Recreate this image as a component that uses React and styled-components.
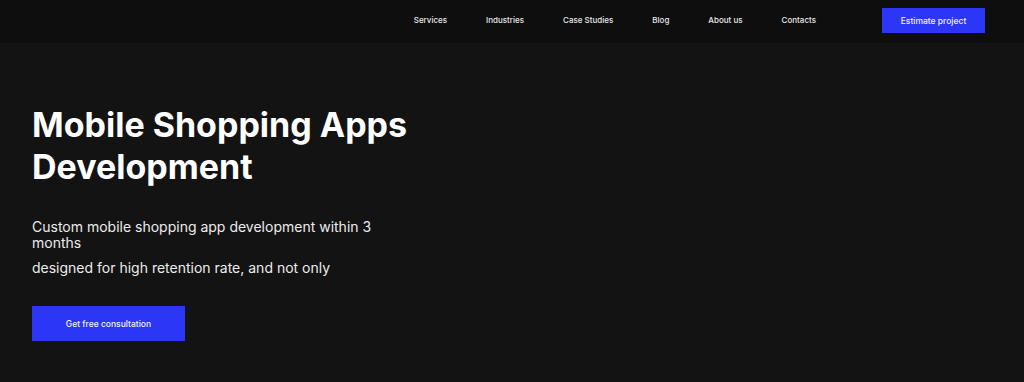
import React from "react";
import styled, { createGlobalStyle } from "styled-components";

const Global = createGlobalStyle`
  html, body { margin: 0; padding: 0; background: #131313; }
  body { font-family: Inter, "Noto Sans", sans-serif; color: #fff; }
  * { box-sizing: border-box; }
`;

const Page = styled.div`
  width: 1024px;
  height: 382px;
  background: #131313;
  overflow: hidden;
`;

const Header = styled.header`
  height: 43px;
  background: #0e0e0e;
  display: flex;
  align-items: center;
  justify-content: flex-end;
  padding-right: 39px;
`;

const Nav = styled.nav`
  display: flex;
  align-items: center;
  gap: 39px;
  margin-right: 66px;
`;

const NavLink = styled.a`
  font-size: 8px;
  font-weight: 500;
  color: #e8e8e8;
  text-decoration: none;
  margin-top: -3px;
`;

const Button = styled.button`
  border: none;
  background: #2b36f7;
  color: #f2f2ff;
  font-family: Inter, "Noto Sans", sans-serif;
  font-size: 8.5px;
  font-weight: 500;
  width: ${(p) => p.$w}px;
  height: ${(p) => p.$h}px;
  padding: 0;
  cursor: pointer;
`;

const HeaderButton = styled(Button)`
  margin-top: -2px;
`;

const Hero = styled.section`
  padding: 61px 0 0 32px;
  display: flex;
  flex-direction: column;
  align-items: flex-start;
`;

const Title = styled.h1`
  margin: 0;
  font-size: 34px;
  font-weight: 700;
  line-height: 42px;
  color: #fff;
`;

const Lead = styled.div`
  margin-top: 31px;
  width: 372px;
  display: flex;
  flex-direction: column;
  gap: 9px;
`;

const LeadLine = styled.p`
  margin: 0;
  font-size: 14px;
  line-height: 16px;
  color: #ececec;
`;

const HeroButton = styled(Button)`
  margin-top: 30px;
`;

const links = ["Services", "Industries", "Case Studies", "Blog", "About us", "Contacts"];

export default function App() {
  return (
    <Page>
      <Global />
      <Header>
        <Nav>
          {links.map((l) => (
            <NavLink key={l} href="#">{l}</NavLink>
          ))}
        </Nav>
        <HeaderButton $w={103} $h={25}>Estimate project</HeaderButton>
      </Header>
      <Hero>
        <Title>
          Mobile Shopping Apps
          <br />
          Development
        </Title>
        <Lead>
          <LeadLine>Custom mobile shopping app development within 3 months</LeadLine>
          <LeadLine>designed for high retention rate, and not only</LeadLine>
        </Lead>
        <HeroButton $w={153} $h={35}>Get free consultation</HeroButton>
      </Hero>
    </Page>
  );
}
